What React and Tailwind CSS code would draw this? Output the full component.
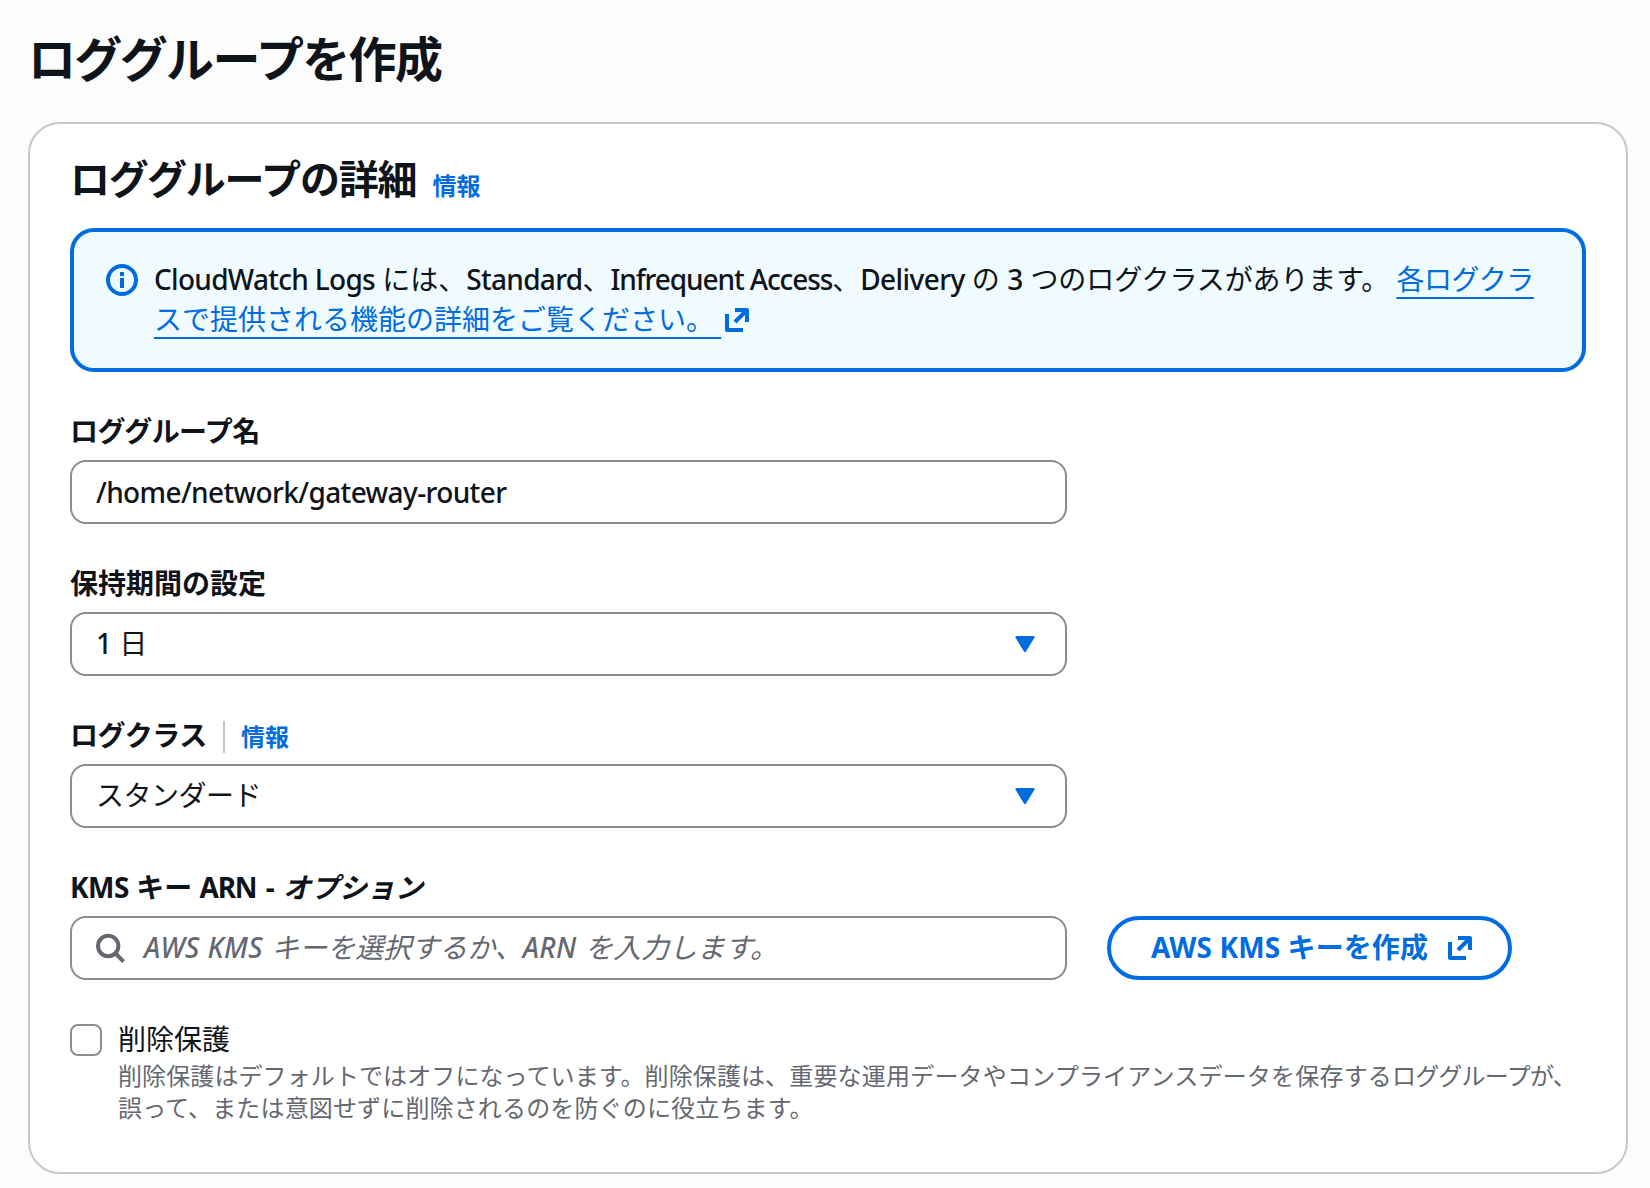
import React, { useState } from "react";

const InfoIcon = () => (
  <svg viewBox="0 0 16 16" className="size-8 shrink-0" fill="none">
    <circle cx="8" cy="8" r="7" stroke="#006ce0" strokeWidth="2" />
    <path d="M7 4h2v2H7zM7 7h2v5H7z" fill="#006ce0" />
  </svg>
);

const ExternalIcon = () => (
  <svg
    viewBox="0 0 16 16"
    className="size-8 shrink-0"
    fill="none"
    stroke="#006ce0"
    strokeWidth="2"
  >
    <path d="M3 5v8h8" strokeLinejoin="round" />
    <path d="M7 3h6v6" strokeLinejoin="round" />
    <path d="m7 9 6-6" />
  </svg>
);

const SearchIcon = () => (
  <svg viewBox="0 0 16 16" className="size-8 shrink-0" fill="none" stroke="#656871" strokeWidth="2">
    <circle cx="7.1" cy="7" r="5.1" />
    <path d="m10.5 10.5 4.3 4.3" />
  </svg>
);

const CaretIcon = () => (
  <svg viewBox="0 0 16 16" className="size-8 shrink-0">
    <path
      d="M3.8 4.6h8.4L8 11.4z"
      fill="#006ce0"
      stroke="#006ce0"
      strokeWidth="1.2"
      strokeLinejoin="round"
    />
  </svg>
);

// 欧文部分
const En = ({ children, className = "" }) => (
  <span className={`font-medium ${className}`}>{children}</span>
);

function SelectBox({ children }) {
  return (
    <button
      type="button"
      className="flex h-16 w-full items-center justify-between rounded-2xl border-2 border-[#8c8c94] bg-white px-6 text-left"
    >
      <span className="pb-0.5">{children}</span>
      <CaretIcon />
    </button>
  );
}

function CreateLogGroup() {
  const [name, setName] = useState("/home/network/gateway-router");
  const [isProtected, setIsProtected] = useState(false);

  return (
    <div
      lang="ja"
      className="min-h-[1188px] w-[1650px] bg-[#fcfcfd] pt-[29px] pr-[22px] pl-7 font-['Noto_Sans','Noto_Sans_CJK_JP',sans-serif] text-[28px] leading-[38px] text-[#0f141a]"
    >
      <h1 className="text-5xl leading-[60px] font-bold tracking-[-1.65px]">
        ロググループを作成
      </h1>

      <div className="mt-[33px] h-[1052px] rounded-[32px] border-2 border-[#c6c6cd] bg-white px-10 pt-[31px]">
        <div className="flex h-12 items-start">
          <h2 className="text-[40px] leading-[48px] font-bold tracking-[-1.15px]">
            ロググループの詳細
          </h2>
          <a href="#" className="ml-4 pt-[15px] text-2xl leading-8 font-bold text-[#006ce0]">
            情報
          </a>
        </div>

        <div className="mt-[25px] flex h-36 gap-4 rounded-3xl border-4 border-[#006ce0] bg-[#f0fbff] px-8 pt-7">
          <div className="flex h-10 items-center">
            <InfoIcon />
          </div>
          <div className="whitespace-nowrap">
            <div className="h-10">
              <En className="tracking-[-0.7px]">CloudWatch Logs</En> には、
              <En className="tracking-[-0.7px]">Standard</En>、
              <En className="tracking-[-1.1px]">Infrequent Access</En>、
              <En className="tracking-[-0.6px]">Delivery</En> の <En>3</En>{" "}
              <span className="tracking-[-0.1px]">つのログクラスがあります。 </span>
              <a
                href="#"
                className="tracking-[-0.4px] text-[#006ce0] underline decoration-2 underline-offset-[7px]"
              >
                各ログクラ
              </a>
            </div>
            <a href="#" className="flex h-10 items-center text-[#006ce0]">
              <span className="pb-0.5 underline decoration-2 underline-offset-[7px]">
                スで提供される機能の詳細をご覧ください。&nbsp;
              </span>
              <ExternalIcon />
            </a>
          </div>
        </div>

        <div className="mt-10 flex w-[997px] flex-col gap-10">
          <div className="flex flex-col gap-2">
            <label htmlFor="name" className="h-10 font-bold tracking-[-0.6px]">
              ロググループ名
            </label>
            <input
              id="name"
              type="text"
              value={name}
              onChange={(e) => setName(e.target.value)}
              className="h-16 rounded-2xl border-2 border-[#8c8c94] bg-white px-6 font-medium tracking-[-0.62px] outline-none"
            />
          </div>

          <div className="flex flex-col gap-2">
            <label className="h-10 font-bold">保持期間の設定</label>
            <SelectBox>
              <En>1</En> 日
            </SelectBox>
          </div>

          <div className="flex flex-col gap-2">
            <div className="flex h-10 items-center">
              <label className="pb-0.5 font-bold tracking-[-0.4px]">ログクラス</label>
              <span className="mt-0.5 ml-4 h-8 w-0.5 bg-[#c6c6cd]" />
              <a href="#" className="ml-4 pt-0.5 text-2xl leading-8 font-bold text-[#006ce0]">
                情報
              </a>
            </div>
            <SelectBox>
              <span className="tracking-[-0.5px]">スタンダード</span>
            </SelectBox>
          </div>
        </div>

        <div className="mt-10 flex items-end gap-10">
          <div className="flex w-[997px] flex-col gap-2">
            <label className="h-10 font-bold">
              <span className="tracking-[-0.5px]">KMS</span> キー{" "}
              <span className="mr-0.5 tracking-[-1.2px]">ARN</span> -{" "}
              <i className="ml-px">オプション</i>
            </label>
            <div
              role="combobox"
              tabIndex={0}
              className="flex h-16 items-center gap-[18px] rounded-2xl border-2 border-[#8c8c94] bg-white px-[22px]"
            >
              <SearchIcon />
              <span className="pb-0.5 text-[#656871] italic">
                <En className="mr-px tracking-[0.4px]">AWS KMS</En> キーを選択するか、
                <En className="mr-px tracking-[0.3px]">ARN</En> を入力します。
              </span>
            </div>
          </div>
          <button
            type="button"
            className="flex h-16 w-[405px] items-center gap-4 rounded-full border-4 border-[#006ce0] bg-white pl-10 font-bold whitespace-nowrap text-[#006ce0]"
          >
            <span className="pb-0.5 tracking-[0.1px]">AWS KMS キーを作成</span>
            <ExternalIcon />
          </button>
        </div>

        <label className="mt-10 flex gap-4">
          <input
            type="checkbox"
            checked={isProtected}
            onChange={(e) => setIsProtected(e.target.checked)}
            className="mt-1 size-8 shrink-0 appearance-none rounded-lg border-2 border-[#8c8c94] bg-white checked:bg-[#006ce0]"
          />
          <span className="whitespace-nowrap">
            <span className="block h-10">削除保護</span>
            <span className="block text-2xl leading-8 tracking-[0.15px] text-[#656871]">
              <span className="tracking-[0.1px]">
                削除保護はデフォルトではオフになっています。削除保護は、
              </span>
              <span className="tracking-[0.2px]">
                重要な運用データやコンプライアンスデータを保存する
              </span>
              <span className="tracking-[-0.7px]">ロググループが、</span>
              <br />
              誤って、または意図せずに削除されるのを防ぐのに役立ちます。
            </span>
          </span>
        </label>
      </div>
    </div>
  );
}

export default CreateLogGroup;
